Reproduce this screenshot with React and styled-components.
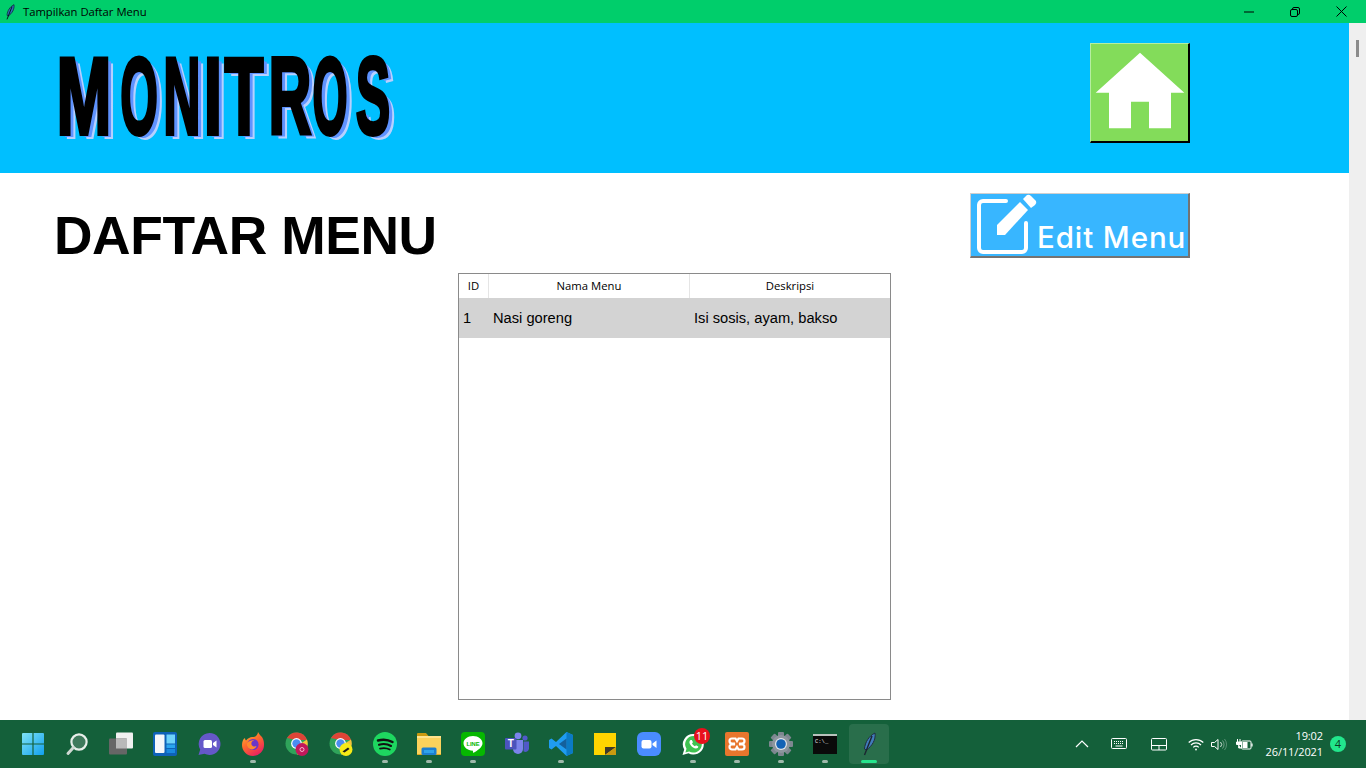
import React from 'react'
import styled, { createGlobalStyle } from 'styled-components'

const GlobalStyle = createGlobalStyle`
  html, body { margin: 0; padding: 0; height: 100%; overflow: hidden; background: #fff; }
  * { box-sizing: border-box; }
`

const Screen = styled.div`
  width: 1366px;
  height: 768px;
  display: flex;
  flex-direction: column;
  font-family: "Liberation Sans", Arial, sans-serif;
`

/* window title bar */
const TitleBar = styled.div`
  height: 23px;
  flex: none;
  background: #00ce6b;
  display: flex;
  align-items: center;
  padding: 0 2px 0 2px;
`
const TitleText = styled.span`
  font: 11.25px "Open Sans", sans-serif;
  color: #000;
  margin-left: 5px;
  flex: 1;
`
const WinButton = styled.div`
  width: 46px;
  height: 23px;
  display: flex;
  align-items: center;
  justify-content: center;
`

const Middle = styled.div`
  flex: 1;
  display: flex;
  min-height: 0;
`
const Content = styled.div`
  flex: 1;
  display: flex;
  flex-direction: column;
  background: #fff;
`
const ScrollTrack = styled.div`
  width: 17px;
  background: #efefef;
  padding: 17px 0 0 7px;
`
const ScrollThumb = styled.div`
  width: 3px;
  height: 17px;
  background: #8b8b8b;
`

/* blue header */
const Header = styled.header`
  height: 150px;
  flex: none;
  background: #00bfff;
  padding: 20px 159px 0 55px;
  display: flex;
  justify-content: space-between;
  align-items: flex-start;
`
const Logo = styled.div`
  display: flex;
  margin-top: 11px;
  height: 84px;
`
const LogoCell = styled.div`
  width: ${p => p.$w}px;
  margin-right: ${p => p.$gap}px;
  height: 84px;
  position: relative;
`
const LogoLetter = styled.span`
  position: absolute;
  left: 50%;
  top: 50%;
  font: 700 110px/1 "Liberation Sans", Arial, sans-serif;
  color: #000;
  -webkit-text-stroke: 4px #000;
  transform: translate(-50%, -50%) scaleX(${p => p.$sx});
  text-shadow:
    ${p => 2 / p.$sx}px 2px 0 #5f93ff,
    ${p => 4 / p.$sx}px 3px 0 #5f93ff,
    ${p => 6 / p.$sx}px 5px 0 #b7d0ff;
`

const HomeButton = styled.button`
  width: 100px;
  height: 100px;
  padding: 0;
  background: #83dc5a;
  border-style: solid;
  border-width: 1px 2px 2px 1px;
  border-color: #b6eea0 #000 #000 #b6eea0;
  display: block;
`

/* page title row */
const TitleRow = styled.div`
  height: 100px;
  flex: none;
  display: flex;
  justify-content: space-between;
  align-items: flex-start;
  padding: 20px 159px 0 54px;
`
const PageTitle = styled.h1`
  margin: 12px 0 0;
  font: 700 53.33px/62px "Liberation Sans", Arial, sans-serif;
  letter-spacing: -0.4px;
  color: #000;
`
const EditButton = styled.button`
  width: 220px;
  height: 65px;
  padding: 0 0 0 1px;
  position: relative;
  background: #38b6ff;
  border-style: solid;
  border-width: 1px 2px 2px 1px;
  border-color: #cfcfcf #737373 #737373 #cfcfcf;
  display: flex;
  align-items: flex-end;
`
const EditIcon = styled.svg`
  flex: none;
  display: block;
`
const EditLabel = styled.span`
  font: 500 29.5px/34px "Inter", sans-serif;
  letter-spacing: 0.9px;
  color: #fff;
  white-space: nowrap;
  margin: 0 0 2px 0;
`

/* data table */
const TableFrame = styled.div`
  width: 433px;
  height: 427px;
  margin: 0 auto;
  border: 1px solid #8a8a8a;
  background: #fff;
`
const Row = styled.div`
  display: grid;
  grid-template-columns: 30px 201px 200px;
  height: ${p => p.$h}px;
  background: ${p => p.$bg};
`
const HeadCell = styled.div`
  font: 11.3px "Open Sans", sans-serif;
  color: #000;
  display: flex;
  align-items: center;
  justify-content: center;
  padding-bottom: 2px;
  border-right: 1px solid #e5e5e5;
  &:last-child { border-right: none; }
`
const BodyCell = styled.div`
  font: 14.67px "Liberation Sans", Arial, sans-serif;
  color: #000;
  display: flex;
  align-items: center;
  padding-left: 4px;
`

/* windows taskbar */
const Taskbar = styled.footer`
  height: 48px;
  flex: none;
  background: #14603a;
  display: flex;
  align-items: stretch;
  padding-left: 11px;
  color: #fff;
`
const TaskApps = styled.div`
  display: flex;
  flex: 1;
`
const TaskSlot = styled.div`
  width: 44px;
  position: relative;
  display: flex;
  align-items: center;
  justify-content: center;
`
const ActiveTile = styled.div`
  position: absolute;
  left: 2px;
  right: 2px;
  top: 4px;
  bottom: 4px;
  background: rgba(255, 255, 255, 0.09);
  border-radius: 4px;
`
const RunDot = styled.div`
  position: absolute;
  bottom: 5px;
  left: 50%;
  transform: translateX(-50%);
  width: ${p => (p.$active ? 16 : 6)}px;
  height: 3px;
  border-radius: 2px;
  background: ${p => (p.$active ? '#25e58c' : '#9fb9ab')};
`
const Badge = styled.div`
  position: absolute;
  top: 8px;
  right: 5px;
  width: 16px;
  height: 16px;
  border-radius: 50%;
  background: #e8101c;
  color: #fff;
  font: 11px/16px "Open Sans", sans-serif;
  text-align: center;
`
const Tray = styled.div`
  display: flex;
  align-items: center;
  width: 304px;
`
const TrayIcon = styled.div`
  width: ${p => p.$w}px;
  display: flex;
  justify-content: center;
`
const Clock = styled.div`
  width: 60px;
  margin-left: 2px;
  text-align: right;
  font: 11px/16px "Open Sans", sans-serif;
  letter-spacing: -0.1px;
  color: #fff;
`
const NotifyDot = styled.div`
  width: 16px;
  height: 16px;
  margin-left: 7px;
  border-radius: 50%;
  background: #22e68c;
  color: #0c3a24;
  font: 11px/16px "Open Sans", sans-serif;
  text-align: center;
`

const Feather = ({ size = 24 }) => (
  <svg width={size} height={size} viewBox="0 0 24 24">
    <path d="M18 1 C12 4 8 10 7.500 17 L9.500 18 C15 14 19 8 18 1Z" fill="#2f6fb5" stroke="#0c1a2e" strokeWidth="1" />
    <path d="M15 4 L7.500 23" stroke="#06101c" strokeWidth="1.400" fill="none" />
  </svg>
)

const Img = ({ children, s = 24 }) => <svg width={s} height={s} viewBox="0 0 24 24" style={{ display: 'block' }}>{children}</svg>

const ChromeBase = () => (
  <>
    <circle cx="11.500" cy="11.500" r="11" fill="#2fa35a" />
    <path d="M2 6 A11 11 0 0 1 22 8 L11.500 8 Z" fill="#de4437" />
    <path d="M22 7.500 A11 11 0 0 1 12 22.500 L15 12 Z" fill="#f5c33b" />
    <circle cx="11.500" cy="11.500" r="5.400" fill="#fff" />
    <circle cx="11.500" cy="11.500" r="4.200" fill="#4a8df0" />
  </>
)

const apps = [
  { key: 'start', el: (
    <Img>
      <defs>
        <linearGradient id="st" x1="0" y1="0" x2="1" y2="1"><stop offset="0" stopColor="#7fe3f5" /><stop offset="1" stopColor="#11a0ee" /></linearGradient>
      </defs>
      <path d="M1 2a1 1 0 0 1 1-1h9.400v10.400H1Z M12.600 1H22a1 1 0 0 1 1 1v9.400H12.600Z M1 12.600h10.400V23H2a1 1 0 0 1-1-1Z M12.600 12.600H23V22a1 1 0 0 1-1 1h-9.400Z" fill="url(#st)" />
    </Img>
  ) },
  { key: 'search', el: (
    <Img>
      <circle cx="14" cy="10" r="7.600" fill="#3f7a5c" stroke="#e8efea" strokeWidth="2.200" />
      <path d="M8.400 15.600 L3 21.500" stroke="#cfd8d2" strokeWidth="3" strokeLinecap="round" />
    </Img>
  ) },
  { key: 'task', el: (
    <Img>
      <rect x="7" y="0.500" width="17" height="16" rx="1" fill="#f0f0f0" />
      <rect x="0" y="6.500" width="18" height="16" rx="1" fill="#666" />
      <rect x="7" y="6.500" width="11" height="10" fill="#b9b9b9" />
    </Img>
  ) },
  { key: 'widgets', el: (
    <Img>
      <rect x="0" y="0" width="24" height="24" rx="2" fill="#0e62b8" />
      <rect x="2" y="2.500" width="9.500" height="18.500" rx="1" fill="#f5f7fa" />
      <rect x="13.500" y="2.500" width="8.500" height="9" fill="#6fd3fa" />
      <rect x="13.500" y="12.500" width="8.500" height="3.500" fill="#2aa5ee" />
      <rect x="13.500" y="17" width="8.500" height="4" fill="#1a8ae0" />
    </Img>
  ) },
  { key: 'chat', el: (
    <Img>
      <path d="M12.500 1a11 11 0 1 1-5 20.800L1.500 23l1.700-5.400A11 11 0 0 1 12.500 1Z" fill="#6558c9" />
      <rect x="6.500" y="8" width="8.500" height="8" rx="1.500" fill="#fff" />
      <path d="M16 11l3.500-2.500v7L16 13Z" fill="#fff" />
    </Img>
  ) },
  { key: 'firefox', run: true, el: (
    <Img>
      <defs>
        <linearGradient id="ff" x1="0" y1="0" x2="0.6" y2="1"><stop offset="0" stopColor="#ffc03a" /><stop offset="0.5" stopColor="#ff6a2c" /><stop offset="1" stopColor="#e9245e" /></linearGradient>
      </defs>
      <path d="M17 0c1 2 2 3 4 5 2 3 2 6 2 8a11 11 0 0 1-22 0c0-3 1-6 3-7 0 1 .5 2 1 2.500C7 6 10 4.500 12 5c2 .5 5-2 5-5Z" fill="url(#ff)" />
      <circle cx="12" cy="12.500" r="5.600" fill="#6a35c8" />
      <path d="M6 11c2-2 5-3 7-2.600-2 .5-3 2-2.500 4 .5 1.800 3 2.600 5 1.600-1 3-4 4-6.500 3C6.500 15.800 5.500 13.500 6 11Z" fill="#ff8a2c" />
    </Img>
  ) },
  { key: 'chrome1', el: (
    <Img>
      <ChromeBase />
      <circle cx="17" cy="17.500" r="6.500" fill="#c2185b" />
      <circle cx="17" cy="17.500" r="2" fill="none" stroke="#f3b6cc" strokeWidth="1" />
    </Img>
  ) },
  { key: 'chrome2', el: (
    <Img>
      <ChromeBase />
      <circle cx="17" cy="17.500" r="6.500" fill="#f6ea17" />
      <path d="M13.500 19.500 L19 15.500 L20.500 17 L15.500 20.500Z" fill="#1c1c1c" />
    </Img>
  ) },
  { key: 'spotify', run: true, el: (
    <Img>
      <circle cx="12" cy="12" r="12" fill="#1ed760" />
      <path d="M5 8.500c5-1.500 10-1 14.500 1.500" stroke="#111" strokeWidth="2.500" fill="none" strokeLinecap="round" />
      <path d="M6 12.800c4-1.200 8.500-.8 12 1.200" stroke="#111" strokeWidth="2.100" fill="none" strokeLinecap="round" />
      <path d="M7 16.600c3.500-.9 7-.6 9.800 1" stroke="#111" strokeWidth="1.700" fill="none" strokeLinecap="round" />
    </Img>
  ) },
  { key: 'folder', run: true, el: (
    <Img>
      <path d="M0 2a1 1 0 0 1 1-1h8l2.500 3H0Z" fill="#c99a10" />
      <rect x="0" y="4" width="24" height="19" rx="1" fill="#fbd25c" />
      <rect x="0" y="4" width="24" height="2" fill="#ffe38c" />
      <path d="M0 22h24v1H0Z" fill="#e0a91e" />
      <rect x="4.500" y="15.500" width="15" height="7.500" rx="1.500" fill="#1c7fd0" />
      <rect x="7" y="18" width="10" height="3" fill="#2fa3ea" />
    </Img>
  ) },
  { key: 'line', run: true, el: (
    <Img>
      <rect x="0" y="0" width="24" height="24" rx="4" fill="#06b700" />
      <path d="M12 4c5.500 0 9.500 3.300 9.500 7.300 0 3.800-5 7.500-9 9.500-.6.200-.6-.8-.5-2C6.500 18.500 2.500 15.300 2.500 11.300 2.500 7.300 6.500 4 12 4Z" fill="#fff" />
      <text x="12" y="13.500" textAnchor="middle" fontFamily="Liberation Sans" fontWeight="700" fontSize="5.800" fill="#06b700">LINE</text>
    </Img>
  ) },
  { key: 'teams', el: (
    <Img>
      <circle cx="13" cy="3.800" r="3.400" fill="#7b83eb" />
      <circle cx="20" cy="6" r="2.600" fill="#5059c9" />
      <path d="M8 8h10v9a5 5 0 0 1-10 0Z" fill="#7b83eb" />
      <path d="M18.500 9.500H24v7a3.500 3.500 0 0 1-5.500 2.800Z" fill="#5059c9" />
      <rect x="0" y="6" width="11.500" height="11.500" rx="1" fill="#4b53bc" />
      <text x="5.700" y="15" textAnchor="middle" fontFamily="Liberation Sans" fontWeight="700" fontSize="10" fill="#fff">T</text>
    </Img>
  ) },
  { key: 'vscode', run: true, el: (
    <Img>
      <path d="M17.500 0 L24 3v18l-6.500 3L7 14l-4.500 3.500L0 16v-8l2.500-1.500L7 10Z" fill="#1f9cf0" />
      <path d="M17.500 0 L24 3v18l-6.500 3Z" fill="#0b7ac4" />
      <path d="M17.500 6.500v11L10 12Z" fill="#14609c" />
    </Img>
  ) },
  { key: 'sticky', el: (
    <Img>
      <rect x="1" y="1" width="22" height="22" fill="#ffd400" />
      <path d="M12 23v-8h11Z" fill="#3f3a2a" />
      <path d="M23 15 L12 23 h11Z" fill="#c99a10" />
    </Img>
  ) },
  { key: 'zoom', el: (
    <Img>
      <rect x="0" y="0" width="24" height="24" rx="6" fill="#4a8cff" />
      <rect x="4.500" y="8" width="10" height="8.500" rx="2" fill="#fff" />
      <path d="M15.500 11.500 L19.500 8.500v7.500L15.500 13Z" fill="#fff" />
    </Img>
  ) },
  { key: 'whatsapp', run: true, badge: '11', el: (
    <Img>
      <path d="M12.500 2a10.300 10.300 0 1 1-5 19.300L1.500 23l1.700-5.600A10.300 10.300 0 0 1 12.500 2Z" fill="#fff" />
      <path d="M12.500 4a8.300 8.300 0 1 1-4.300 15.400l-3.800 1 1.100-3.600A8.300 8.300 0 0 1 12.500 4Z" fill="#3fc351" />
      <path d="M9.500 8c-1.500 1-1.500 3 0 5 1.500 2 3.500 3.500 5.500 3.500 1.500 0 2.300-1 2.300-2l-2.300-1.200-1 1c-1.300-.5-2.500-1.800-3-3l1-1L10.800 8Z" fill="#fff" />
    </Img>
  ) },
  { key: 'xampp', run: true, el: (
    <Img>
      <rect x="0" y="0" width="24" height="24" rx="2" fill="#e8762d" />
      <path d="M7 6.500h3.500L12 9l1.500-2.500H17a2.500 2.500 0 0 1 0 5h-2v1h2a2.500 2.500 0 0 1 0 5h-3.500L12 15l-1.500 2.500H7a2.500 2.500 0 0 1 0-5h2v-1H7a2.500 2.500 0 0 1 0-5Z" fill="none" stroke="#fff" strokeWidth="2.200" />
    </Img>
  ) },
  { key: 'settings', run: true, el: (
    <Img>
      <g fill="#7d8790">
        {[0, 45, 90, 135].map(a => <rect key={a} x="9" y="0" width="6" height="24" rx="1" transform={`rotate(${a} 12 12)`} />)}
      </g>
      <circle cx="12" cy="12" r="9" fill="#8d969e" />
      <circle cx="12" cy="12" r="6" fill="#e3e7ea" />
      <circle cx="12" cy="12" r="4.800" fill="#1363b5" />
    </Img>
  ) },
  { key: 'cmd', run: true, el: (
    <Img>
      <rect x="0" y="2" width="24" height="20" fill="#0a0a0a" />
      <rect x="0" y="2" width="24" height="2" fill="#b8c2bc" />
      <text x="2" y="10.500" fontFamily="Liberation Mono" fontSize="5.500" fill="#e6e6e6">C:\_</text>
    </Img>
  ) },
  { key: 'feather', run: true, active: true, el: <Feather /> },
]

const Chevron = () => (
  <svg width="14" height="10" viewBox="0 0 14 10"><path d="M1 8 L7 2 L13 8" stroke="#fff" strokeWidth="1.200" fill="none" /></svg>
)
const Keyboard = () => (
  <svg width="16" height="12" viewBox="0 0 16 12">
    <rect x="0.500" y="0.500" width="15" height="10" rx="1" fill="none" stroke="#fff" />
    <path d="M3 3.500h10M3 5.500h10" stroke="#fff" strokeDasharray="1 1" />
    <path d="M4.500 8h7" stroke="#fff" />
  </svg>
)
const Touchpad = () => (
  <svg width="16" height="13" viewBox="0 0 16 13">
    <rect x="0.500" y="0.500" width="15" height="11.500" rx="1" fill="none" stroke="#fff" />
    <path d="M0.500 7.500h15M8 7.500V12" stroke="#fff" />
  </svg>
)
const Wifi = () => (
  <svg width="16" height="13" viewBox="0 0 16 13" fill="none" stroke="#fff" strokeWidth="1.200">
    <path d="M0.700 4.500a10.500 10.500 0 0 1 14.600 0" />
    <path d="M3 7a7 7 0 0 1 10 0" />
    <path d="M5.300 9.300a3.700 3.700 0 0 1 5.400 0" />
    <circle cx="8" cy="11.500" r="0.900" fill="#fff" stroke="none" />
  </svg>
)
const Speaker = () => (
  <svg width="16" height="13" viewBox="0 0 16 13" fill="none" stroke="#fff">
    <path d="M0.500 4.500h3L7 1.500v10l-3.500-3h-3Z" />
    <path d="M9.500 4a3.500 3.500 0 0 1 0 5" strokeOpacity="0.8" />
    <path d="M11.500 2.500a6 6 0 0 1 0 8" strokeOpacity="0.4" />
    <path d="M13.500 1a8.500 8.500 0 0 1 0 11" strokeOpacity="0.3" />
  </svg>
)
const Battery = () => (
  <svg width="17" height="13" viewBox="0 0 17 13">
    <path d="M1.500 1v3M4 1v3M0.500 4h4.500v2.500H0.500ZM2.700 6.500V10H5" stroke="#fff" fill="#fff" strokeWidth="1" />
    <rect x="5.500" y="3" width="9.500" height="8" rx="1" fill="none" stroke="#fff" />
    <rect x="6.500" y="4" width="5" height="6" fill="#fff" />
    <rect x="15.300" y="5.500" width="1.300" height="3" fill="#fff" />
  </svg>
)

const App = () => {
  const letters = [
    { c: 'M', w: 57, gap: 8, sx: 0.6 },
    { c: 'O', w: 37, gap: 6, sx: 0.44 },
    { c: 'N', w: 37, gap: 7, sx: 0.47 },
    { c: 'I', w: 11, gap: 6, sx: 0.6 },
    { c: 'T', w: 39, gap: 5, sx: 0.58 },
    { c: 'R', w: 44, gap: 1, sx: 0.54 },
    { c: 'O', w: 34, gap: 8, sx: 0.41 },
    { c: 'S', w: 35, gap: 0, sx: 0.47 },
  ]
  return (
    <Screen>
      <GlobalStyle />
      <TitleBar>
        <Feather size={16} />
        <TitleText>Tampilkan Daftar Menu</TitleText>
        <WinButton>
          <svg width="10" height="2" viewBox="0 0 10 2"><path d="M0 1h10" stroke="#000" /></svg>
        </WinButton>
        <WinButton>
          <svg width="10" height="10" viewBox="0 0 10 10" fill="none" stroke="#000">
            <rect x="0.500" y="2.500" width="7" height="7" rx="1.500" />
            <path d="M2.500 2.500V2a1.500 1.500 0 0 1 1.500-1.500h4A1.500 1.500 0 0 1 9.500 2v4A1.500 1.500 0 0 1 8 7.500h-.5" />
          </svg>
        </WinButton>
        <WinButton>
          <svg width="11" height="11" viewBox="0 0 11 11"><path d="M0.500 0.500l10 10M10.500 0.500l-10 10" stroke="#000" /></svg>
        </WinButton>
      </TitleBar>

      <Middle>
        <Content>
          <Header>
            <Logo>
              {letters.map((l, i) => (
                <LogoCell key={i} $w={l.w} $gap={l.gap}>
                  <LogoLetter $sx={l.sx}>{l.c}</LogoLetter>
                </LogoCell>
              ))}
            </Logo>
            <HomeButton aria-label="Home">
              <svg width="97" height="97" viewBox="1 1 97 97" style={{ display: 'block' }}>
                <path d="M50 9.700 L94.300 49.700 H81 V85.300 H59 V58.700 H41 V85.300 H19 V49.700 H5.700 Z" fill="#fff" />
              </svg>
            </HomeButton>
          </Header>

          <TitleRow>
            <PageTitle>DAFTAR MENU</PageTitle>
            <EditButton>
              <EditIcon width="65" height="62" viewBox="0 0 65 62">
                <path d="M34 7 H11 a4 4 0 0 0 -4 4 V54 a4 4 0 0 0 4 4 H50 a4 4 0 0 0 4 -4 V29" fill="none" stroke="#fff" strokeWidth="4" strokeLinecap="round" />
                <path d="M25 41 V31 L48 8 L56 16 L33 41 Z" fill="#fff" />
                <path d="M51 5 L55 1 Q57 0 59 2 L64 7 Q65 9 63 11 L59 14 Z" fill="#fff" />
              </EditIcon>
              <EditLabel>Edit Menu</EditLabel>
            </EditButton>
          </TitleRow>

          <TableFrame>
            <Row $h={24} $bg="#fff">
              <HeadCell>ID</HeadCell>
              <HeadCell>Nama Menu</HeadCell>
              <HeadCell>Deskripsi</HeadCell>
            </Row>
            <Row $h={40} $bg="#d3d3d3">
              <BodyCell>1</BodyCell>
              <BodyCell>Nasi goreng</BodyCell>
              <BodyCell>Isi sosis, ayam, bakso</BodyCell>
            </Row>
          </TableFrame>
        </Content>
        <ScrollTrack><ScrollThumb /></ScrollTrack>
      </Middle>

      <Taskbar>
        <TaskApps>
          {apps.map(a => (
            <TaskSlot key={a.key}>
              {a.active && <ActiveTile />}
              {a.el}
              {a.badge && <Badge>{a.badge}</Badge>}
              {(a.run || a.active) && <RunDot $active={a.active} />}
            </TaskSlot>
          ))}
        </TaskApps>
        <Tray>
          <TrayIcon $w={40}><Chevron /></TrayIcon>
          <TrayIcon $w={34}><Keyboard /></TrayIcon>
          <TrayIcon $w={46}><Touchpad /></TrayIcon>
          <TrayIcon $w={28}><Wifi /></TrayIcon>
          <TrayIcon $w={17}><Speaker /></TrayIcon>
          <TrayIcon $w={34}><Battery /></TrayIcon>
          <Clock>19:02<br />26/11/2021</Clock>
          <NotifyDot>4</NotifyDot>
        </Tray>
      </Taskbar>
    </Screen>
  )
}

export default App
